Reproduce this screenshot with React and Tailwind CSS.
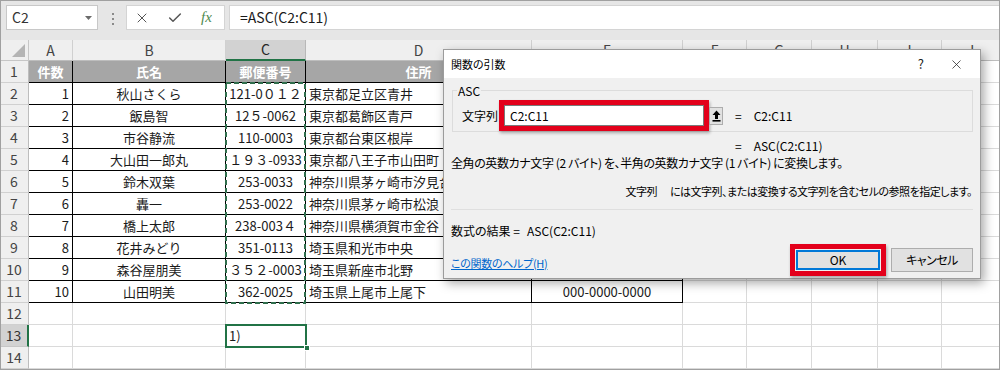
import React from 'react';
import { X, Check } from 'lucide-react';

const COLS = ['A', 'B', 'C', 'D', 'E', 'F', 'G', 'H', 'I', 'J'];

const HEAD = ['件数', '氏名', '郵便番号', '住所', ''];

const DATA = [
  ['1', '秋山さくら', '121-0０１２', '東京都足立区青井', ''],
  ['2', '飯島智', '12５-0062', '東京都葛飾区青戸', ''],
  ['3', '市谷静流', '110-0003', '東京都台東区根岸', ''],
  ['4', '大山田一郎丸', '１９３-0933', '東京都八王子市山田町', ''],
  ['5', '鈴木双葉', '253-0033', '神奈川県茅ヶ崎市汐見台', ''],
  ['6', '轟一', '253-0022', '神奈川県茅ヶ崎市松浪', ''],
  ['7', '橋上太郎', '238-003４', '神奈川県横須賀市金谷', ''],
  ['8', '花井みどり', '351-0113', '埼玉県和光市中央', ''],
  ['9', '森谷屋朋美', '３５２-0003', '埼玉県新座市北野', ''],
  ['10', '山田明美', '362-0025', '埼玉県上尾市上尾下', '000-0000-0000'],
];

const ALIGN = {
  1: 'justify-end pr-[3px]',
  2: 'justify-center',
  3: 'justify-center',
  4: 'justify-start pl-[3px]',
  5: 'justify-center',
};

function ColHeader({ c }) {
  if (c === 0) {
    return (
      <div className="relative bg-[#efefef] border-r border-b border-[#c6c6c6]">
        <svg className="absolute right-[3px] bottom-[3px]" width="13" height="13" viewBox="0 0 13 13">
          <polygon points="13,0 13,13 0,13" fill="#b4b4b4" />
        </svg>
      </div>
    );
  }
  const letter = COLS[c - 1];
  if (letter === 'C') {
    return (
      <div className="flex items-center justify-center bg-[#d2d2d2] border-r border-r-[#b8b8b8] border-b-2 border-b-[#217346] text-[14px] text-[#262626]">
        C
      </div>
    );
  }
  return (
    <div className="flex items-center justify-center bg-[#efefef] border-r border-r-[#d0d0d0] border-b border-b-[#bdbdbd] text-[14px] text-[#444]">
      {letter}
    </div>
  );
}

function RowHeader({ r }) {
  if (r === 13) {
    return (
      <div className="flex items-center justify-center bg-[#d2d2d2] border-b border-b-[#c6c6c6] border-r-2 border-r-[#217346] text-[14px] text-[#333]">
        {r}
      </div>
    );
  }
  return (
    <div className="flex items-center justify-center bg-[#efefef] border-b border-b-[#d0d0d0] border-r border-r-[#bdbdbd] text-[14px] text-[#444]">
      {r}
    </div>
  );
}

function DataCell({ r, c }) {
  const inTable = r <= 11 && c >= 1 && c <= 5;
  if (r === 1 && inTable) {
    return (
      <div className="flex items-center justify-center bg-[#a6a6a6] border-r border-b border-black text-[13px] font-bold text-white whitespace-nowrap overflow-hidden">
        {HEAD[c - 1]}
      </div>
    );
  }
  if (inTable) {
    const val = DATA[r - 2][c - 1];
    return (
      <div className={'flex items-center border-r border-b border-black text-[13px] whitespace-nowrap overflow-hidden ' + ALIGN[c]}>
        {val}
      </div>
    );
  }
  const val = r === 13 && c === 3 ? '1)' : '';
  return (
    <div className="flex items-center justify-start pl-[3px] border-r border-b border-[#dadada] text-[13px] whitespace-nowrap overflow-hidden">
      {val}
    </div>
  );
}

function Sheet() {
  const cells = [];
  for (let c = 0; c <= 10; c++) cells.push(<ColHeader key={'h' + c} c={c} />);
  for (let r = 1; r <= 14; r++) {
    for (let c = 0; c <= 10; c++) {
      cells.push(c === 0 ? <RowHeader key={r + '-' + c} r={r} /> : <DataCell key={r + '-' + c} r={r} c={c} />);
    }
  }
  return (
    <div className="relative grid grid-cols-[29px_44px_153px_80px_226px_151px_64px_65px_66px_64px_58px] grid-rows-[21px_repeat(14,22px)]">
      {cells}
      <svg className="absolute left-[224px] top-[42px] pointer-events-none" width="84" height="222" viewBox="0 0 84 222">
        <rect x="2" y="1" width="79" height="220" fill="none" stroke="#2f6d4c" strokeWidth="2" strokeDasharray="5 3" />
      </svg>
      <div className="absolute left-[225px] top-[284px] w-[82px] h-[24px] border-2 border-[#217346] pointer-events-none">
        <div className="absolute right-[-5px] bottom-[-5px] w-[6px] h-[6px] bg-[#217346] border border-white" />
      </div>
    </div>
  );
}

function FormulaBar() {
  return (
    <div className="h-[40px] bg-[#e6e6e6] flex items-start pt-[5px] pl-[6px]">
      <div className="w-[92px] h-[25px] bg-white border border-[#c8c8c8] flex items-center pl-[5px] pr-[5px] text-[14px] text-[#333]">
        <span>C2</span>
        <svg className="ml-auto" width="7" height="4" viewBox="0 0 7 4">
          <polygon points="0,0 7,0 3.5,4" fill="#6b6b6b" />
        </svg>
      </div>
      <div className="ml-[14px] mt-[8px] flex flex-col gap-[3px]">
        <div className="w-[2px] h-[2px] bg-[#8a8a8a]" />
        <div className="w-[2px] h-[2px] bg-[#8a8a8a]" />
        <div className="w-[2px] h-[2px] bg-[#8a8a8a]" />
      </div>
      <div className="ml-[12px] w-[99px] h-[25px] bg-white border border-[#d4d4d4] flex items-center">
        <X className="ml-[7px]" size={16} strokeWidth={1.5} color="#555" />
        <Check className="ml-[17px]" size={16} strokeWidth={2.2} color="#555" />
        <span className="ml-[18px] font-['Liberation_Serif',serif] italic text-[15px] text-[#4f8a4f]">fx</span>
      </div>
      <div className="ml-[4px] flex-1 h-[25px] bg-white border border-[#d4d4d4] flex items-center pl-[10px] text-[14px] text-[#1a1a1a]">
        =ASC(C2:C11)
      </div>
    </div>
  );
}

function Dialog() {
  return (
    <div className="absolute left-[443px] top-[49px] w-[538px] h-[230px] bg-[#f0f0f0] border border-[#9c9c9c] shadow-[3px_4px_10px_rgba(0,0,0,0.35)] flex flex-col text-[12px] text-black [font-feature-settings:'palt']">
      <div className="h-[28px] bg-white flex items-center pl-[7px] pr-[16px]">
        <span className="text-[11px]">関数の引数</span>
        <span className="ml-auto text-[13px] text-[#222]">?</span>
        <X className="ml-[25px]" size={15} strokeWidth={1.2} color="#222" />
      </div>
      <div className="px-[7px] flex flex-col">
        <div className="relative mt-[12px] ml-[1px] w-[521px] h-[42px] border border-[#dcdcdc] flex items-start pt-[9px] pl-[9px]">
          <span className="absolute left-[4px] top-[-7px] px-[1px] bg-[#f0f0f0] leading-[14px]">ASC</span>
          <span className="w-[37px] self-center leading-[16px]">文字列</span>
          <div className="w-[210px] h-[31px] border-[5px] border-[#e3001b] shadow-[1px_2px_3px_rgba(0,0,0,0.3)]">
            <div className="h-full bg-white border border-[#7a7a7a] flex items-center pl-[5px]">C2:C11</div>
          </div>
          <div className="self-center w-[14px] h-[18px] border border-[#adadad] bg-[#e1e1e1] flex items-center justify-center">
            <svg width="9" height="12" viewBox="0 0 9 12">
              <path d="M4.5 0.5 L8.5 5 H6 V9 H3 V5 H0.5 Z" fill="#000" />
              <rect x="0.5" y="10" width="8" height="1.6" fill="#000" />
            </svg>
          </div>
          <span className="self-center ml-[12px] leading-[16px]">=</span>
          <span className="self-center ml-[12px] leading-[16px]">C2:C11</span>
        </div>
        <div className="mt-[6px] pl-[284px] leading-[16px] flex">
          <span>=</span>
          <span className="ml-[12px]">ASC(C2:C11)</span>
        </div>
        <div className="mt-[1px] leading-[16px] tracking-[-0.4px]">全角の英数カナ文字 (2 バイト) を、半角の英数カナ文字 (1 バイト) に変換します。</div>
        <div className="mt-[12px] leading-[16px] text-right pr-[1px] text-[11px] tracking-[-0.5px]">
          <span>文字列</span>
          <span className="ml-[13px]">には文字列、または変換する文字列を含むセルの参照を指定します。</span>
        </div>
        <div className="mt-[10px] h-px bg-[#dfdfdf]" />
        <div className="mt-[13px] leading-[16px] flex">
          <span className="w-[76px]">数式の結果 =</span>
          <span>ASC(C2:C11)</span>
        </div>
        <div className="mt-[5px] h-[32px] flex items-center">
          <span className="pt-[6px] text-[11px] tracking-[-0.3px] text-[#0066cc] underline">この関数のヘルプ(H)</span>
          <div className="ml-auto w-[96px] h-[32px] border-[5px] border-[#e3001b] p-px shadow-[1px_2px_3px_rgba(0,0,0,0.3)]">
            <div className="h-full bg-[#e1e1e1] border-2 border-[#0078d7] flex items-center justify-center">OK</div>
          </div>
          <div className="ml-[5px] w-[82px] h-[24px] border border-[#adadad] bg-[#e1e1e1] flex items-center justify-center tracking-[-0.5px]">キャンセル</div>
        </div>
      </div>
    </div>
  );
}

export default function App() {
  return (
    <div className="relative w-[1000px] h-[370px] overflow-hidden bg-white font-['Noto_Sans_CJK_JP','Liberation_Sans',sans-serif] text-[#1a1a1a]">
      <FormulaBar />
      <Sheet />
      <Dialog />
      <div className="absolute inset-0 border border-[#a0a0a0] pointer-events-none" />
    </div>
  );
}
